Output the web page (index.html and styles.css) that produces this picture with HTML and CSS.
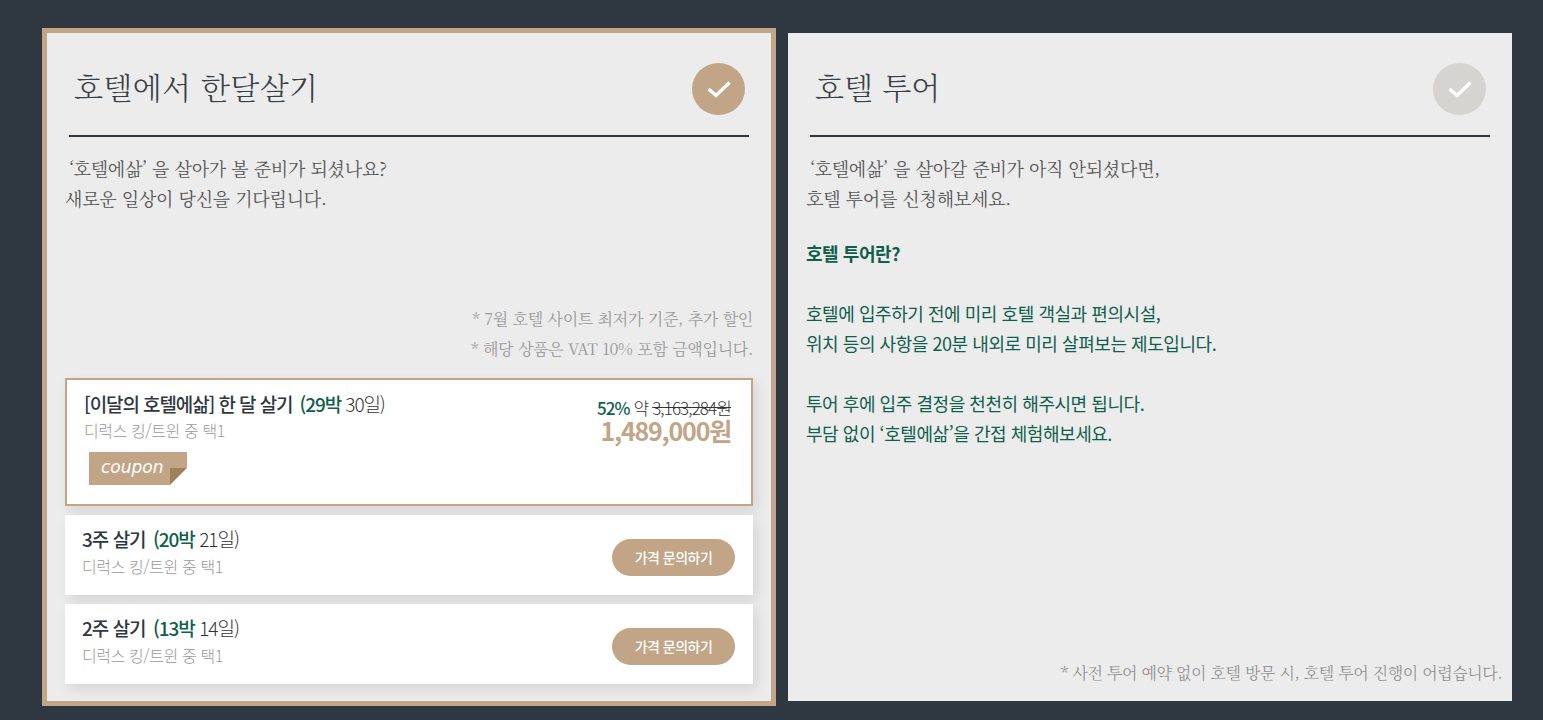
FILE: index.html
```html
<!DOCTYPE html>
<html lang="ko">
<head>
<meta charset="utf-8">
<title>호텔에서 한달살기</title>
<link rel="stylesheet" href="styles.css">
</head>
<body>
<main class="page">
  <section class="panel panel-active">
    <header class="head">
      <h2 class="title">호텔에서 한달살기</h2>
      <span class="check check-on"><svg viewBox="0 0 24 18" width="24" height="18"><path d="M1.5 9 9 15.5 22.5 2.5" fill="none" stroke="#fff" stroke-width="3.4"/></svg></span>
    </header>
    <div class="lead">
      <p>‘호텔에삶’ 을 살아가 볼 준비가 되셨나요?</p>
      <p class="out">새로운 일상이 당신을 기다립니다.</p>
    </div>
    <div class="notes">
      <p>* 7월 호텔 사이트 최저가 기준, 추가 할인</p>
      <p>* 해당 상품은 VAT 10% 포함 금액입니다.</p>
    </div>
    <article class="card card-main">
      <div class="info">
        <h3 class="name">[이달의 호텔에삶] 한 달 살기 <span class="stay"><b>(29박</b> <i>30일)</i></span></h3>
        <p class="room">디럭스 킹/트윈 중 택1</p>
        <div class="coupon"><span>coupon</span><svg class="fold" viewBox="0 0 17 17" width="17" height="17"><path d="M0 0H17L0 17Z" fill="#a07f5b"/><path d="M0 17 17 0V17Z" fill="#fff"/></svg></div>
      </div>
      <div class="price">
        <p class="was"><b>52%</b> 약 <s>3,163,284원</s></p>
        <p class="now">1,489,000원</p>
      </div>
    </article>
    <article class="card">
      <div class="info-short">
        <h3 class="name">3주 살기 <span class="stay"><b>(20박</b> <i>21일)</i></span></h3>
        <p class="room">디럭스 킹/트윈 중 택1</p>
      </div>
      <button class="ask">가격 문의하기</button>
    </article>
    <article class="card">
      <div class="info-short">
        <h3 class="name">2주 살기 <span class="stay"><b>(13박</b> <i>14일)</i></span></h3>
        <p class="room">디럭스 킹/트윈 중 택1</p>
      </div>
      <button class="ask">가격 문의하기</button>
    </article>
  </section>
  <section class="panel panel-plain">
    <header class="head">
      <h2 class="title">호텔 투어</h2>
      <span class="check check-off"><svg viewBox="0 0 24 18" width="24" height="18"><path d="M1.5 9 9 15.5 22.5 2.5" fill="none" stroke="#fff" stroke-width="3.4"/></svg></span>
    </header>
    <div class="lead">
      <p>‘호텔에삶’ 을 살아갈 준비가 아직 안되셨다면,</p>
      <p class="out">호텔 투어를 신청해보세요.</p>
    </div>
    <div class="tour">
      <p class="tour-q">호텔 투어란?</p>
      <p>호텔에 입주하기 전에 미리 호텔 객실과 편의시설,<br>위치 등의 사항을 20분 내외로 미리 살펴보는 제도입니다.</p>
      <p>투어 후에 입주 결정을 천천히 해주시면 됩니다.<br>부담 없이 ‘호텔에삶’을 간접 체험해보세요.</p>
    </div>
    <p class="foot">* 사전 투어 예약 없이 호텔 방문 시, 호텔 투어 진행이 어렵습니다.</p>
  </section>
</main>
</body>
</html>
```
FILE: styles.css
```css
* { box-sizing: border-box; }
html, body { margin: 0; height: 720px; overflow: hidden; }
body {
  background: #2f3740;
  color: #333;
  font-family: "Noto Sans CJK KR", "Noto Sans", sans-serif;
}
p, h2, h3 { margin: 0; font-weight: 400; }

.page {
  display: flex;
  align-items: flex-start;
  gap: 12px;
  padding: 28px 0 0 42px;
}
.panel {
  display: flex;
  flex-direction: column;
  background: #ececed;
}
.panel-active {
  width: 734px;
  height: 678px;
  border: 5px solid #c2a587;
  padding: 0 18px;
}
.panel-plain {
  width: 724px;
  height: 668px;
  margin-top: 5px;
  padding: 0 10px 0 18px;
}

.head {
  display: flex;
  align-items: flex-start;
  justify-content: space-between;
  height: 104px;
  margin: 0 4px;
  padding: 29px 4px 0 5px;
  border-bottom: 2px solid #2f3740;
}
.panel-plain .head { margin: 0 12px 0 4px; }
.title {
  font-family: "Noto Serif CJK KR", "Noto Sans CJK KR", sans-serif;
  font-size: 30px;
  font-weight: 300;
  line-height: 48px;
  color: #3a3f45;
}
.panel-active .title { letter-spacing: .35px; }
.check {
  display: flex;
  align-items: center;
  justify-content: center;
  width: 53px;
  height: 52px;
  margin-top: 1px;
  border-radius: 50%;
}
.check-on { background: #c2a587; }
.check-off { background: #d6d4d0; }

.lead {
  margin-top: 16px;
  font-family: "Noto Serif CJK KR", "Noto Sans CJK KR", sans-serif;
  font-size: 18px;
  font-weight: 300;
  line-height: 30px;
  letter-spacing: -.25px;
  color: #555;
}
.lead p:not(.out) { padding-left: 4px; }

.notes {
  margin-top: 91px;
  text-align: right;
  font-family: "Noto Serif CJK KR", "Noto Sans CJK KR", sans-serif;
  font-size: 16px;
  font-weight: 300;
  line-height: 30px;
  letter-spacing: -.3px;
  color: #999;
}

.card {
  display: flex;
  align-items: center;
  justify-content: space-between;
  height: 80px;
  margin-top: 9px;
  padding: 0 18px 0 17px;
  background: #fff;
  box-shadow: 4px 5px 12px rgba(0, 0, 0, .1);
}
.card-main {
  align-items: flex-start;
  height: 128px;
  margin-top: 14px;
  padding: 11px 20px 0 17px;
  border: 2px solid #c2a587;
}
.info-short { padding-bottom: 5px; }
.info-short .room { margin-top: 1px; }
.name {
  font-size: 19px;
  font-weight: 500;
  line-height: 26px;
  letter-spacing: -1px;
  color: #2f3740;
}
.card-main .name { letter-spacing: -1.1px; }
.stay { margin-left: 3px; }
.stay b { font-weight: 500; color: #0f5f4b; }
.stay i { font-style: normal; font-weight: 300; color: #333; }
.room {
  font-size: 16px;
  font-weight: 300;
  line-height: 26px;
  letter-spacing: -.4px;
  color: #999;
}
.coupon {
  position: relative;
  width: 98px;
  height: 33px;
  margin: 9px 0 0 5px;
  padding: 3px 0 0 12px;
  background: #c2a587;
  font-family: "DejaVu Sans", sans-serif;
  font-size: 17px;
  font-style: italic;
  font-weight: 300;
  line-height: 24px;
  color: #fff;
}
.fold { position: absolute; right: 0; bottom: 0; display: block; }
.price { text-align: right; }
.was {
  margin-top: 8px;
  font-size: 17px;
  font-weight: 300;
  line-height: 18px;
  letter-spacing: -.9px;
  color: #333;
}
.was b { font-weight: 500; color: #0f5f4b; }
.now {
  font-size: 25px;
  font-weight: 700;
  line-height: 26px;
  letter-spacing: -1.2px;
  color: #c2a587;
}
.ask {
  width: 123px;
  height: 37px;
  margin-top: 5px;
  padding: 0;
  border: 0;
  border-radius: 19px;
  background: #c2a587;
  color: #fff;
  font: 500 14px/37px "Noto Sans CJK KR", sans-serif;
  letter-spacing: -.5px;
}

.tour {
  display: flex;
  flex-direction: column;
  gap: 30px;
  margin-top: 25px;
  font-size: 18px;
  font-weight: 300;
  line-height: 30px;
  letter-spacing: -.45px;
  color: #0f5f4b;
}
.tour-q { font-weight: 700; }
.foot {
  margin-top: auto;
  padding-bottom: 13px;
  text-align: right;
  font-family: "Noto Serif CJK KR", "Noto Sans CJK KR", sans-serif;
  font-size: 16px;
  font-weight: 300;
  line-height: 30px;
  letter-spacing: -.46px;
  color: #888;
}
```
